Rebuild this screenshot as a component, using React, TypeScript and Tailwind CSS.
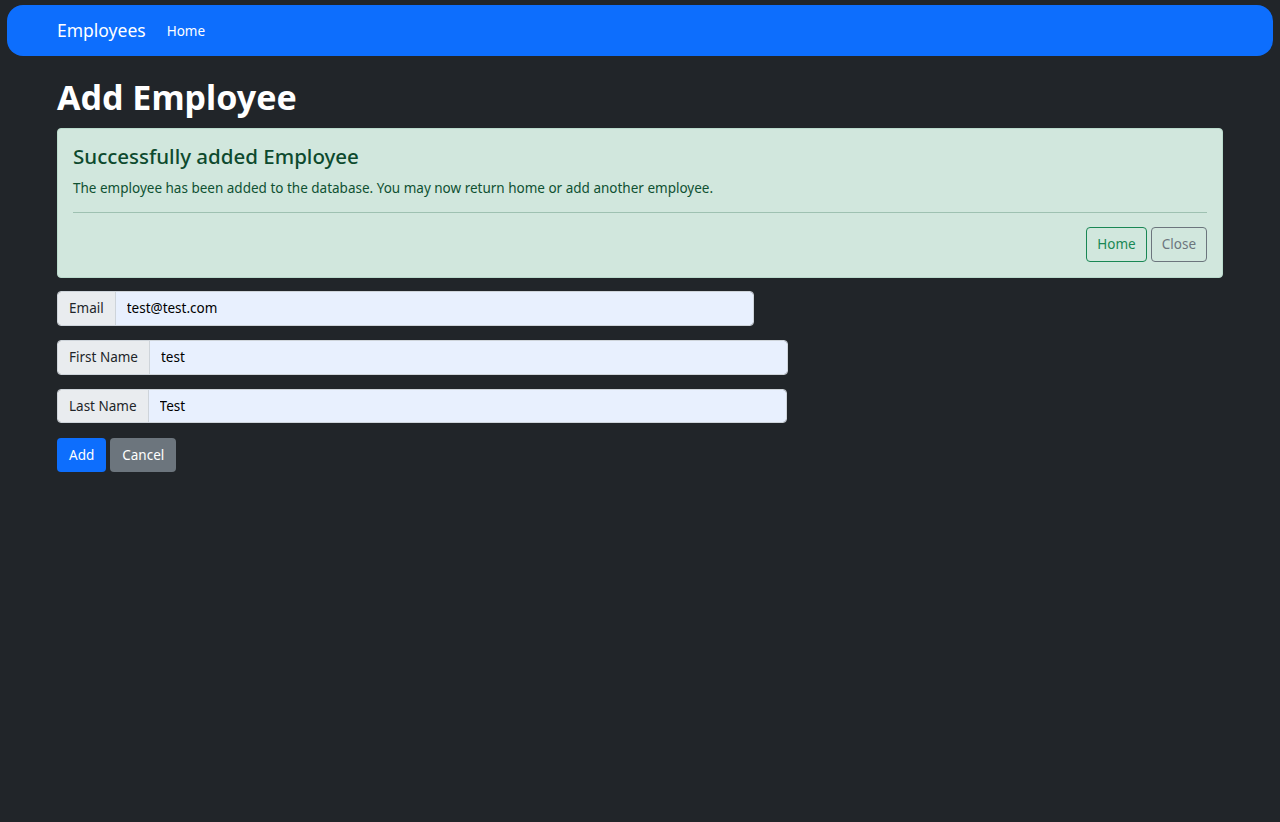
export default function App() {
  return (
    <div className="min-h-screen bg-[#212529] pt-[5px] font-['Noto_Sans',sans-serif] text-[#dee2e6]">
      <nav className="mx-[7px] flex h-[51px] items-center rounded-[16px] bg-[#0d6efd] px-[50px]">
        <span className="mr-[21px] text-[17.5px] text-white">Employees</span>
        <span className="pt-[1px] text-[13.5px] text-white">Home</span>
      </nav>

      <main className="px-[57px]">
        <h1 className="mt-[18px] mb-[8px] text-[34px] leading-[46px] font-bold text-white">Add Employee</h1>

        <div className="rounded-[4px] border border-[#badbcc] bg-[#d1e7dd] px-[15px] pt-[13px] pb-[15px] text-[#0f5132]">
          <h4 className="text-[20.5px] leading-[28px] font-medium text-[#0d4a2e]">Successfully added Employee</h4>
          <p className="mt-[8px] text-[13.5px] leading-[20px]">
            The employee has been added to the database. You may now return home or add another employee.
          </p>
          <hr className="mt-[14px] border-t border-[#9ec1b1]" />
          <div className="mt-[14px] flex justify-end gap-[4px]">
            <button className="h-[35px] rounded-[4px] border border-[#198754] px-[10px] text-[13.5px] text-[#198754]">Home</button>
            <button className="h-[35px] rounded-[4px] border border-[#6c757d] px-[10px] text-[13.5px] text-[#6c757d]">Close</button>
          </div>
        </div>

        <form className="mt-[13px] flex flex-col gap-[14px]">
          <div className="flex h-[35px] w-[697px] overflow-hidden rounded-[4px] border border-[#ced4da] text-[13.5px]">
            <span className="flex items-center border-r border-[#ced4da] bg-[#e9ecef] px-[11px] text-[#212529]">Email</span>
            <input readOnly value="test@test.com" className="flex-1 bg-[#e8f0fe] px-[11px] text-[#000] outline-none" />
          </div>
          <div className="flex h-[35px] w-[731px] overflow-hidden rounded-[4px] border border-[#ced4da] text-[13.5px]">
            <span className="flex items-center border-r border-[#ced4da] bg-[#e9ecef] px-[11px] text-[#212529]">First Name</span>
            <input readOnly value="test" className="flex-1 bg-[#e8f0fe] px-[11px] text-[#000] outline-none" />
          </div>
          <div className="flex h-[34px] w-[730px] overflow-hidden rounded-[4px] border border-[#ced4da] text-[13.5px]">
            <span className="flex items-center border-r border-[#ced4da] bg-[#e9ecef] px-[11px] text-[#212529]">Last Name</span>
            <input readOnly value="Test" className="flex-1 bg-[#e8f0fe] px-[11px] text-[#000] outline-none" />
          </div>
          <div className="mt-[1px] flex gap-[4px]">
            <button type="button" className="h-[34px] rounded-[4px] bg-[#0d6efd] px-[12px] text-[13.5px] text-white">Add</button>
            <button type="button" className="h-[34px] rounded-[4px] bg-[#6c757d] px-[12px] text-[13.5px] text-white">Cancel</button>
          </div>
        </form>
      </main>
    </div>
  );
}
